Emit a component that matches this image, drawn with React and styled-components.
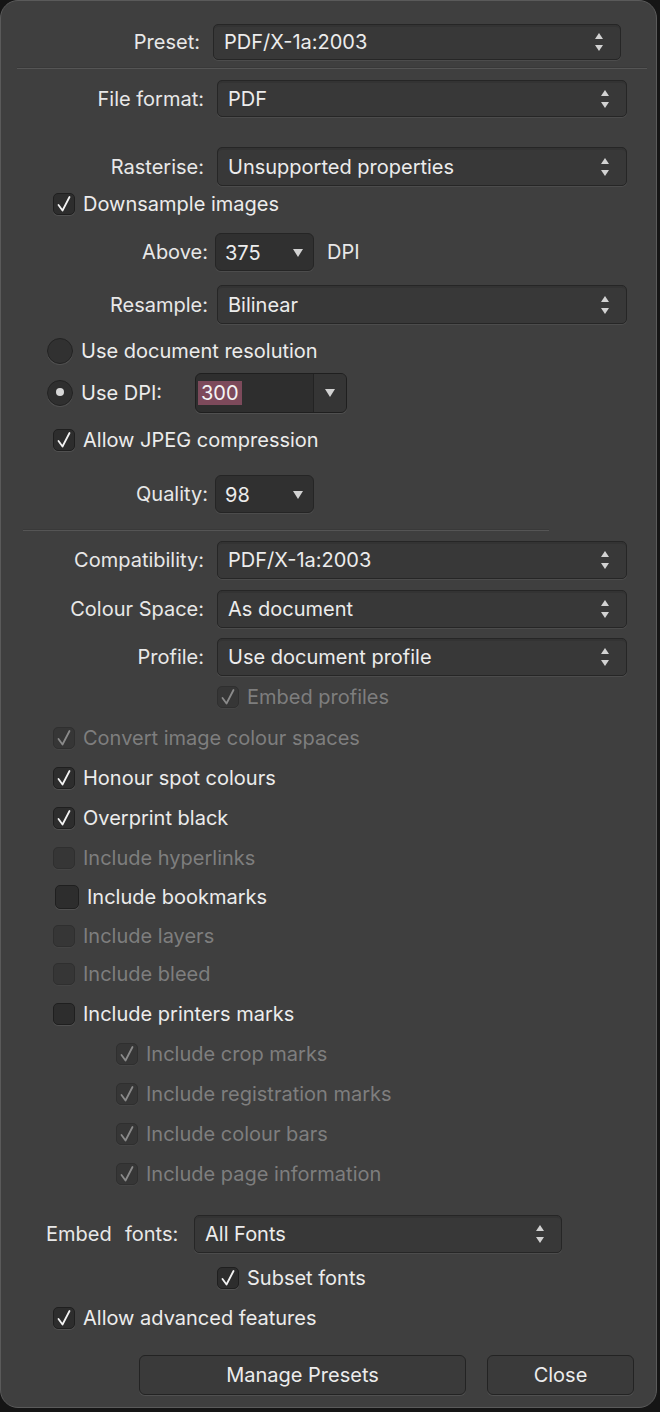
import styled, { createGlobalStyle } from "styled-components";

const GlobalStyle = createGlobalStyle`
  html, body {
    margin: 0;
    padding: 0;
    background: #151515;
  }
  body {
    font-family: Inter, "Liberation Sans", sans-serif;
    font-size: 20px;
    color: #e6e6e6;
  }
`;

function UpDown() {
  return (
    <svg width="10" height="22" viewBox="0 0 10 22">
      <path d="M5 2 L9 8 L1 8 Z" fill="#d2d2d2" />
      <path d="M5 20 L9 14 L1 14 Z" fill="#d2d2d2" />
    </svg>
  );
}

function Down() {
  return (
    <svg width="12" height="10" viewBox="0 0 12 10">
      <path d="M1 1 L11 1 L6 9 Z" fill="#d2d2d2" />
    </svg>
  );
}

function Tick({ dim }) {
  return (
    <svg width="16" height="18" viewBox="0 0 16 18">
      <path
        d="M2.5 10 L6.5 15.5 L13.5 2"
        fill="none"
        stroke={dim ? "#8a8a8a" : "#f2f2f2"}
        strokeWidth="1.8"
        strokeLinecap="round"
        strokeLinejoin="round"
      />
    </svg>
  );
}

function Select({ w, h, value }) {
  return (
    <SelectBox $w={w} $h={h}>
      <span>{value}</span>
      <UpDown />
    </SelectBox>
  );
}

function Dropdown({ value }) {
  return (
    <SmallSelect>
      <span>{value}</span>
      <Down />
    </SmallSelect>
  );
}

function Check({ x, mt, on, dim, size, gap, children }) {
  return (
    <CheckRow $x={x} $mt={mt} $dim={dim}>
      <Box $size={size || 22} $dim={dim}>{on && <Tick dim={dim} />}</Box>
      <CheckText $gap={gap || 8}>{children}</CheckText>
    </CheckRow>
  );
}

export default function App() {
  return (
    <>
      <GlobalStyle />
      <Panel>
        <FieldRow $mt={23}>
          <Label $w={199}>Preset:</Label>
          <Control $ml={13}>
            <Select w={408} h={36} value="PDF/X-1a:2003" />
          </Control>
        </FieldRow>
        <Rule $mt={7} $x={16} $w={630} />

        <FieldRow $mt={11}>
          <Label $w={203}>File format:</Label>
          <Control $ml={13}>
            <Select w={410} h={37} value="PDF" />
          </Control>
        </FieldRow>
        <FieldRow $mt={30}>
          <Label $w={203}>Rasterise:</Label>
          <Control $ml={13}>
            <Select w={410} h={39} value="Unsupported properties" />
          </Control>
        </FieldRow>
        <Check x={52} mt={7} on>Downsample images</Check>

        <FieldRow $mt={18}>
          <Label $w={207}>Above:</Label>
          <Control $ml={7}>
            <Dropdown value="375" />
          </Control>
          <Unit>DPI</Unit>
        </FieldRow>
        <FieldRow $mt={14}>
          <Label $w={207}>Resample:</Label>
          <Control $ml={9}>
            <Select w={410} h={39} value="Bilinear" />
          </Control>
        </FieldRow>

        <RadioRow $mt={14}>
          <Radio />
          <CheckText $gap={8}>Use document resolution</CheckText>
        </RadioRow>
        <RadioRow $mt={9}>
          <Radio $on />
          <CheckText $gap={8} $w={114}>Use DPI:</CheckText>
          <Combo>
            <ComboField>
              <Selected>300</Selected>
            </ComboField>
            <ComboButton>
              <Down />
            </ComboButton>
          </Combo>
        </RadioRow>

        <Check x={52} mt={16} on>Allow JPEG compression</Check>

        <FieldRow $mt={24}>
          <Label $w={207}>Quality:</Label>
          <Control $ml={7}>
            <Dropdown value="98" />
          </Control>
        </FieldRow>
        <Rule $mt={16} $x={22} $w={526} />

        <FieldRow $mt={10}>
          <Label $w={203}>Compatibility:</Label>
          <Control $ml={13}>
            <Select w={410} h={38} value="PDF/X-1a:2003" />
          </Control>
        </FieldRow>
        <FieldRow $mt={11}>
          <Label $w={203}>Colour Space:</Label>
          <Control $ml={13}>
            <Select w={410} h={38} value="As document" />
          </Control>
        </FieldRow>
        <FieldRow $mt={10}>
          <Label $w={203}>Profile:</Label>
          <Control $ml={13}>
            <Select w={410} h={38} value="Use document profile" />
          </Control>
        </FieldRow>
        <Check x={216} mt={10} on dim>Embed profiles</Check>

        <Check x={52} mt={19} on dim>Convert image colour spaces</Check>
        <Check x={52} mt={18} on>Honour spot colours</Check>
        <Check x={52} mt={18} on>Overprint black</Check>
        <Check x={52} mt={18} dim>Include hyperlinks</Check>
        <Check x={54} mt={17} size={24} gap={8}>Include bookmarks</Check>
        <Check x={52} mt={17} dim>Include layers</Check>
        <Check x={52} mt={16} dim>Include bleed</Check>
        <Check x={52} mt={18}>Include printers marks</Check>
        <Check x={115} mt={18} on dim>Include crop marks</Check>
        <Check x={115} mt={18} on dim>Include registration marks</Check>
        <Check x={115} mt={18} on dim>Include colour bars</Check>
        <Check x={115} mt={18} on dim>Include page information</Check>

        <FieldRow $mt={30}>
          <FontsLabel>Embed  fonts:</FontsLabel>
          <Control $ml={14}>
            <Select w={368} h={38} value="All Fonts" />
          </Control>
        </FieldRow>
        <Check x={216} mt={14} on>Subset fonts</Check>
        <Check x={52} mt={18} on>Allow advanced features</Check>

        <ButtonRow>
          <Button $w={327}>Manage Presets</Button>
          <Button $w={147}>Close</Button>
        </ButtonRow>
      </Panel>
    </>
  );
}

const Panel = styled.div`
  box-sizing: border-box;
  width: 657px;
  height: 1408px;
  background: #3f3f3f;
  border: 1px solid #5a5a5a;
  border-radius: 18px;
  display: flex;
  flex-direction: column;
  overflow: hidden;
`;

const FieldRow = styled.div`
  display: flex;
  align-items: center;
  margin-top: ${(p) => p.$mt}px;
`;

const Label = styled.div`
  width: ${(p) => p.$w}px;
  flex-shrink: 0;
  text-align: right;
  color: #e8e8e8;
`;

const FontsLabel = styled.div`
  margin-left: 45px;
  width: 134px;
  white-space: pre;
  word-spacing: 1px;
  color: #e8e8e8;
`;

const Control = styled.div`
  margin-left: ${(p) => p.$ml}px;
  display: flex;
`;

const SelectBox = styled.div`
  box-sizing: border-box;
  width: ${(p) => p.$w}px;
  height: ${(p) => p.$h}px;
  display: flex;
  align-items: center;
  justify-content: space-between;
  padding: 0 16px 0 10px;
  background: #383838;
  border: 1.5px solid #262626;
  border-radius: 5px;
  box-shadow: 0 1px 0 #4c4c4c, inset 0 2px 0 #333333;
  color: #ececec;
`;

const SmallSelect = styled.div`
  box-sizing: border-box;
  width: 99px;
  height: 38px;
  display: flex;
  align-items: center;
  justify-content: space-between;
  padding: 2px 9px 0 9px;
  background: #303030;
  border: 1.5px solid #252525;
  border-radius: 6px;
  box-shadow: 0 1px 0 #4c4c4c;
  color: #ececec;
`;

const Unit = styled.span`
  margin-left: 13px;
  color: #e8e8e8;
`;

const Rule = styled.div`
  margin-top: ${(p) => p.$mt}px;
  margin-left: ${(p) => p.$x}px;
  width: ${(p) => p.$w}px;
  height: 2px;
  flex-shrink: 0;
  background: #555555;
  border-top: 1px solid #393939;
  box-sizing: border-box;
`;

const CheckRow = styled.div`
  display: flex;
  align-items: center;
  height: 22px;
  margin-top: ${(p) => p.$mt}px;
  padding-left: ${(p) => p.$x}px;
  color: ${(p) => (p.$dim ? "#7e7e7e" : "#ececec")};
`;

const Box = styled.div`
  box-sizing: border-box;
  width: ${(p) => p.$size}px;
  height: ${(p) => p.$size}px;
  flex-shrink: 0;
  display: flex;
  align-items: center;
  justify-content: center;
  background: ${(p) => (p.$dim ? "#363636" : "#2d2d2d")};
  border: 1.5px solid ${(p) => (p.$dim ? "#2f2f2f" : "#1f1f1f")};
  border-radius: 5px;
  box-shadow: 0 1px 0 ${(p) => (p.$dim ? "#454545" : "#505050")};
`;

const CheckText = styled.span`
  margin-left: ${(p) => p.$gap}px;
  white-space: nowrap;
  ${(p) => (p.$w ? `width: ${p.$w}px; flex-shrink: 0;` : "")}
`;

const RadioRow = styled.div`
  display: flex;
  align-items: center;
  margin-top: ${(p) => p.$mt}px;
  padding-left: 46px;
  min-height: 26px;
  color: #ececec;
`;

const Radio = styled.div`
  box-sizing: border-box;
  width: 26px;
  height: 26px;
  flex-shrink: 0;
  border-radius: 50%;
  background: ${(p) => (p.$on ? "#2f2f2f" : "#313131")};
  border: 1.5px solid #222222;
  box-shadow: 0 1px 0 #505050;
  display: flex;
  align-items: center;
  justify-content: center;

  &::after {
    content: "";
    display: ${(p) => (p.$on ? "block" : "none")};
    width: 8px;
    height: 8px;
    margin-top: -2px;
    border-radius: 50%;
    background: #d8d8d8;
  }
`;

const Combo = styled.div`
  box-sizing: border-box;
  width: 152px;
  height: 40px;
  display: flex;
  background: #2e2e2e;
  border: 1.5px solid #1f1f1f;
  border-radius: 6px;
  box-shadow: 0 1px 0 #505050;
  overflow: hidden;
`;

const ComboField = styled.div`
  flex: 1;
  display: flex;
  align-items: center;
  padding-left: 2px;
  border-right: 1.5px solid #232323;
`;

const Selected = styled.span`
  background: #7d4a5b;
  color: #f4f4f4;
  padding: 1px 3px;
  line-height: 22px;
`;

const ComboButton = styled.div`
  width: 32px;
  display: flex;
  align-items: center;
  justify-content: center;
  background: #353535;
`;

const ButtonRow = styled.div`
  display: flex;
  gap: 21px;
  margin-top: 26px;
  padding-left: 138px;
`;

const Button = styled.button`
  box-sizing: border-box;
  width: ${(p) => p.$w}px;
  height: 40px;
  background: #3a3a3a;
  border: 1.5px solid #232323;
  border-radius: 6px;
  box-shadow: 0 1px 0 #505050;
  color: #ececec;
  font-family: Inter, "Liberation Sans", sans-serif;
  font-size: 20px;
`;
